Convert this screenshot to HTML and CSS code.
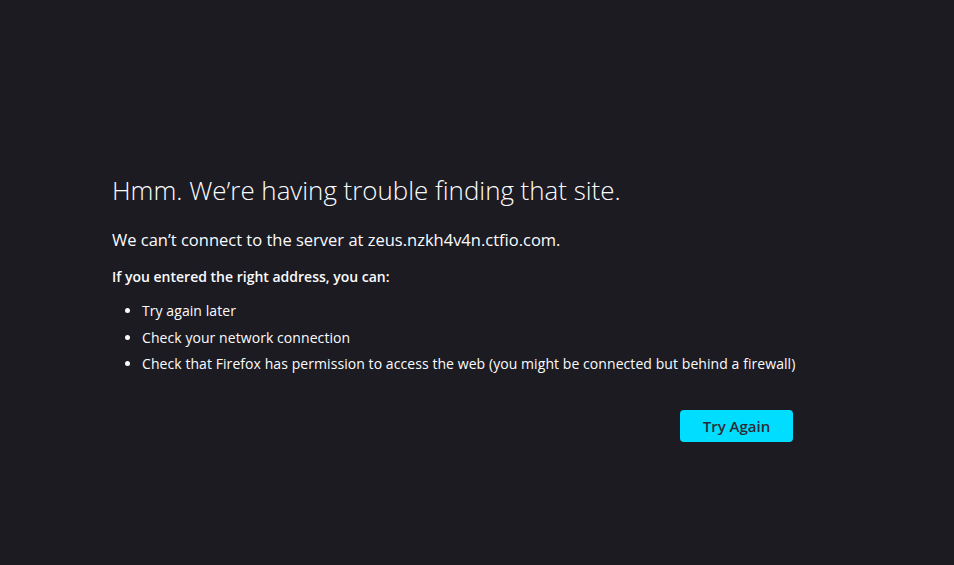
FILE: index.html
```html
<!DOCTYPE html>
<html lang="en">
<head>
<meta charset="utf-8">
<title>Problem loading page</title>
<link rel="stylesheet" href="styles.css">
</head>
<body>
<main class="container">
  <h1 class="title">Hmm. We’re having trouble finding that site.</h1>
  <p class="desc">We can’t connect to the server at zeus.nzkh4v4n.ctfio.com.</p>
  <p class="hint">If you entered the right address, you can:</p>
  <ul class="list">
    <li>Try again later</li>
    <li>Check your network connection</li>
    <li>Check that Firefox has permission to access the web (you might be connected but behind a firewall)</li>
  </ul>
  <div class="actions">
    <button class="btn">Try Again</button>
  </div>
</main>
</body>
</html>
```

FILE: styles.css
```css
html, body {
  margin: 0;
  height: 100%;
}
body {
  background: #1c1b22;
  color: #fbfbfe;
  font-family: "Open Sans", "Noto Sans", sans-serif;
  display: flex;
  flex-direction: column;
}
.container {
  width: 681px;
  margin: 174px 0 0 112px;
}
.title {
  margin: 0;
  font-size: 25.9px;
  font-weight: 300;
  line-height: 32px;
}
.desc {
  margin: 22px 0 0;
  font-size: 16.5px;
  line-height: 24px;
}
.hint {
  margin: 15px 0 0;
  font-size: 14px;
  font-weight: 600;
  line-height: 20px;
}
.list {
  margin: 14px 0 0;
  padding-left: 30px;
  font-size: 14px;
  letter-spacing: 0.005em;
  line-height: 20px;
  white-space: nowrap;
}
.list li {
  margin-bottom: 6.5px;
}
.actions {
  display: flex;
  justify-content: flex-end;
  margin-top: 36px;
}
.btn {
  width: 113px;
  height: 32px;
  border: none;
  border-radius: 4px;
  background: #00ddff;
  color: #2b2a33;
  font-family: inherit;
  font-size: 15px;
  font-weight: 600;
}
```
